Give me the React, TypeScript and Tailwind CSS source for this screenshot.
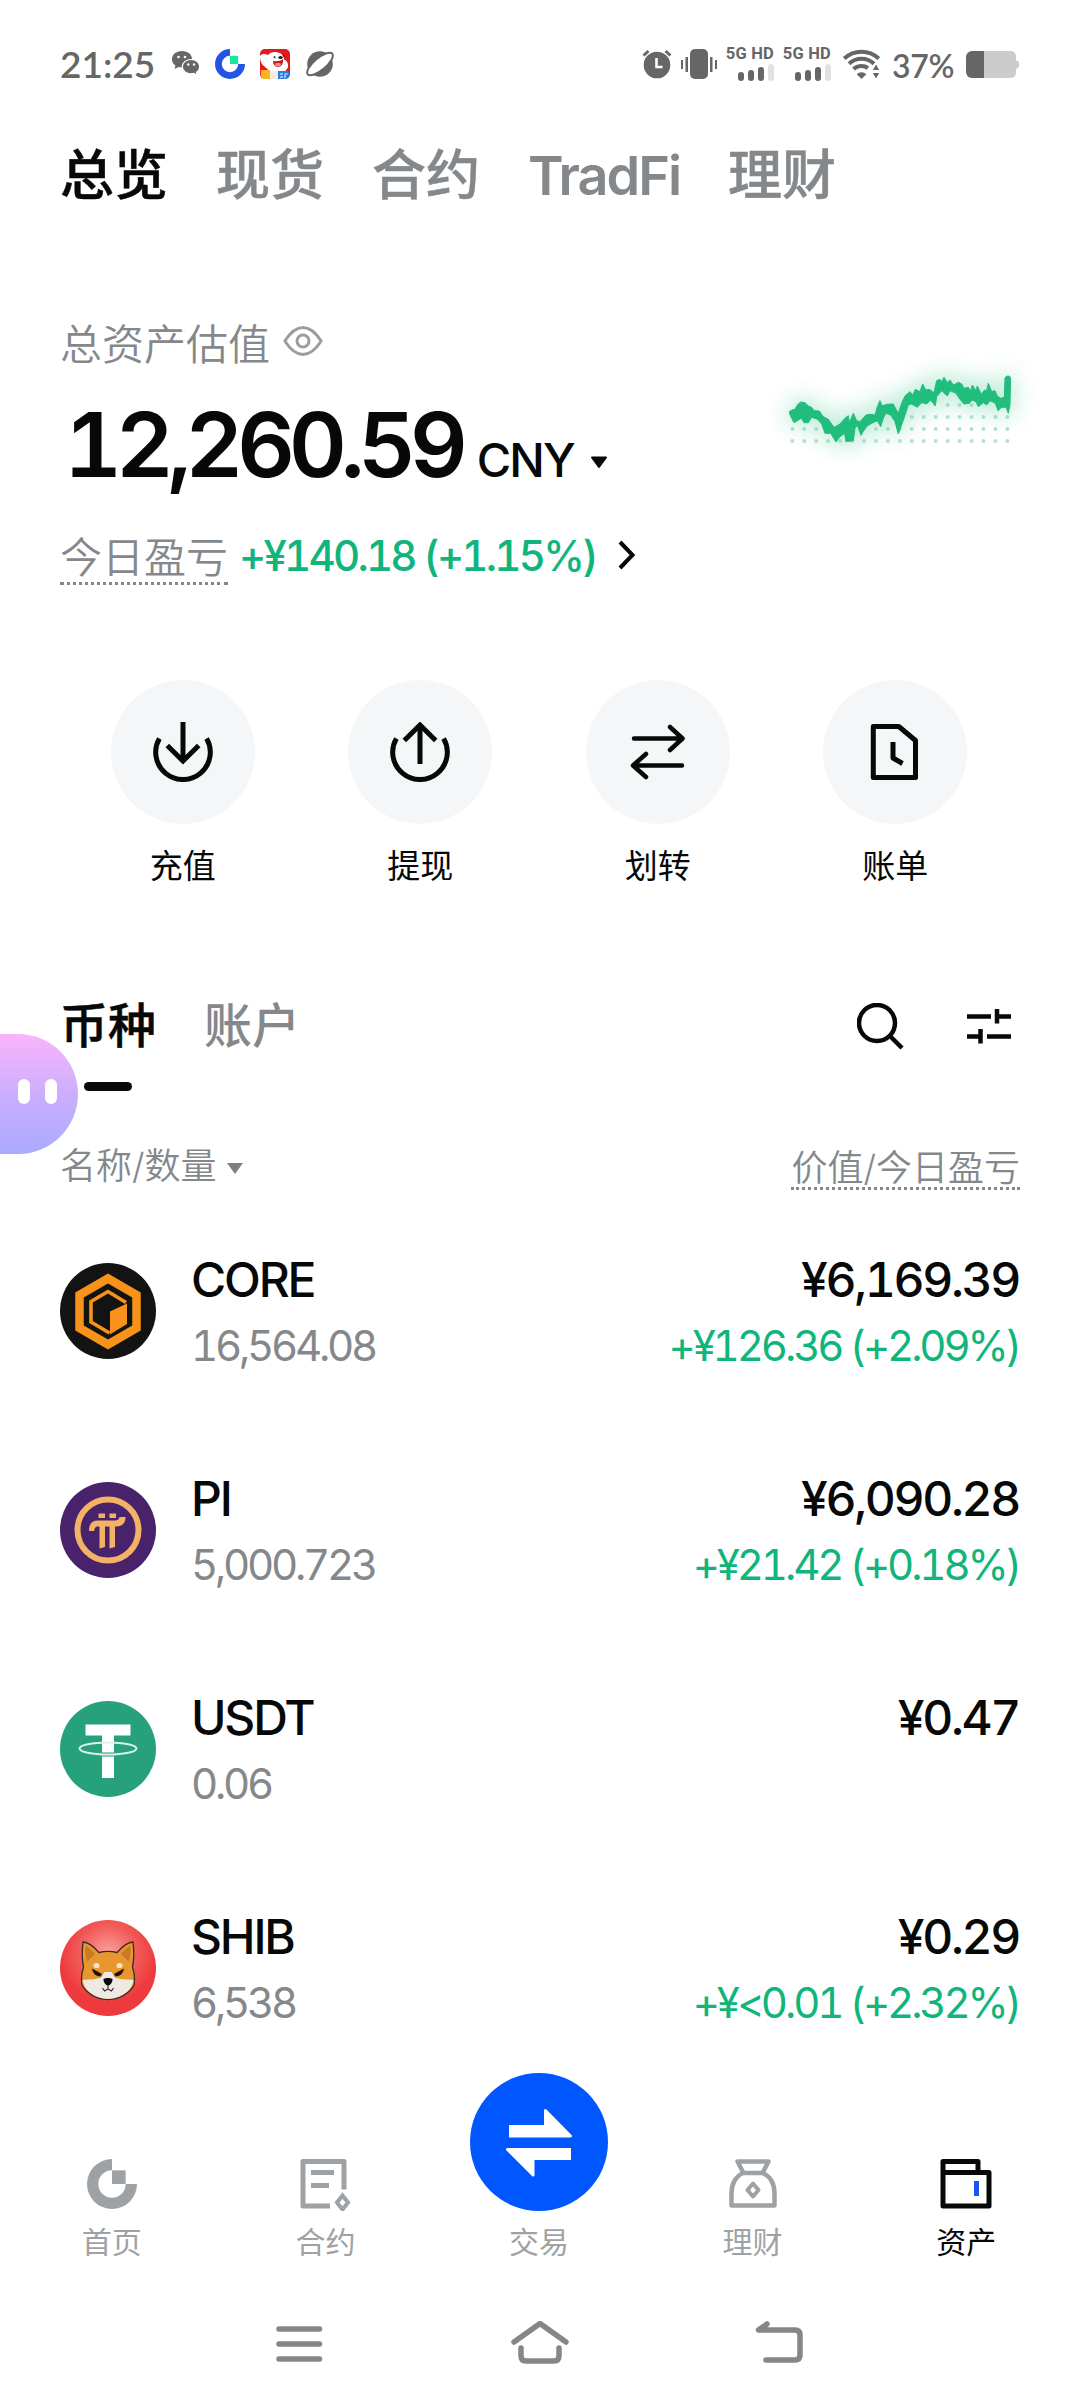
import type { ReactNode } from "react";

/* ---------- Status bar ---------- */

function WechatIcon() {
  return (
    <svg width="30" height="28" viewBox="0 0 30 28" fill="#666">
      <path d="M11 1C5 1 1 4.600 1 9.200c0 2.700 1.300 4.900 3.400 6.300L3.600 19l4-2c1 .3 2.200.5 3.400.5C17 17.500 21 13.800 21 9.200S17 1 11 1z" />
      <path
        d="M20 9.500c-5 0-8.700 3.200-8.700 7.200s3.700 7.100 8.700 7.100c1 0 2-.1 2.900-.4l3.300 1.900-.7-3.100c2-1.300 3.200-3.200 3.200-5.500 0-4-3.700-7.200-8.700-7.200z"
        stroke="#fff"
        strokeWidth="1.200"
      />
      <g fill="#fff">
        <circle cx="7.500" cy="7" r="1.300" />
        <circle cx="14" cy="7" r="1.300" />
        <circle cx="17.300" cy="14.500" r="1.200" />
        <circle cx="23" cy="14.500" r="1.200" />
      </g>
    </svg>
  );
}

function GateIcon({ size, ring, square }: { size: number; ring: string; square: string }) {
  return (
    <svg width={size} height={size} viewBox="0 0 30 30">
      <path d="M15 0a15 15 0 1 0 15 15h-6.800A8.200 8.200 0 1 1 15 6.800z" fill={ring} />
      <path d="M15 6.800h8.200V15H15z" fill={square} />
    </svg>
  );
}

function DogAppIcon() {
  return (
    <svg width="30" height="30" viewBox="0 0 30 30">
      <rect width="30" height="30" rx="5" fill="#e5191c" />
      <path d="M0 7c2-2.500 5-2.500 8-1 2-2.500 6-3.500 10-2.500 4 1 6 4 6 7 3 1 4.500 4 4 8l-3 4H10L4 17C1 15 0 11 0 7z" fill="#fff" />
      <path d="M13 12c4 .5 8 0 10-2 .5 4-1 8-5 8-3 0-5-3-5-6z" fill="#c8161d" />
      <ellipse cx="18" cy="15.500" rx="3" ry="1.800" fill="#f58a8a" />
      <ellipse cx="20.500" cy="8.500" rx="2.200" ry="1.500" fill="#222" />
      <circle cx="14.500" cy="8.200" r="1" fill="#222" />
      <circle cx="23.500" cy="6.800" r=".9" fill="#222" />
      <path d="M1 21h9v9H5a4 4 0 0 1-4-4z" fill="#f8b51c" />
      <path d="M10 22h8v8h-8z" fill="#f3ece0" />
      <path d="M18 22h11v4a4 4 0 0 1-4 4h-7z" fill="#2b7be4" />
      <path d="M20 25h3m1.500 0h3M20 28h3m2-2v3" stroke="#fff" />
    </svg>
  );
}

function PlanetIcon() {
  return (
    <svg width="30" height="28" viewBox="0 0 30 28">
      <circle cx="15" cy="14" r="12.800" fill="#666" />
      <ellipse cx="15" cy="14" rx="16" ry="6" transform="rotate(-40 15 14)" fill="#fff" stroke="#666" strokeWidth="2" />
    </svg>
  );
}

function AlarmIcon() {
  return (
    <svg width="30" height="30" viewBox="0 0 30 30" fill="none">
      <circle cx="15" cy="16" r="13.300" fill="#666" />
      <path d="M1.500 6.500 6.500 2M28.500 6.500 23.500 2" stroke="#666" strokeWidth="3" />
      <path d="M14.500 9v9h6" stroke="#fff" strokeWidth="2.600" />
    </svg>
  );
}

function VibrateIcon() {
  return (
    <svg width="36" height="30" viewBox="0 0 36 30" fill="#666">
      <rect x="9" width="18" height="30" rx="5" />
      <path d="M0 11h2v9H0zM4.500 8H7v15H4.500zM34 11h2v9h-2zM29 8h2.500v15H29z" />
    </svg>
  );
}

function Signal() {
  return (
    <div className="flex w-[48px] flex-col items-end">
      <span className="whitespace-nowrap font-['Roboto'] text-[16.500px] font-bold leading-[13px] tracking-[0.200px]">5G HD</span>
      <div className="mt-1 flex items-end gap-1">
        <i className="h-[9px] w-[6px] rounded-sm bg-[#666]" />
        <i className="h-[11px] w-[6px] rounded-sm bg-[#666]" />
        <i className="h-[14px] w-[6px] rounded-sm bg-[#666]" />
        <i className="h-[17px] w-[6px] rounded-sm bg-[#e2e2e2]" />
      </div>
    </div>
  );
}

function WifiIcon() {
  return (
    <svg width="37" height="30" viewBox="0 0 37 30" fill="none" stroke="#666" strokeWidth="4">
      <path d="M1.300 9.500a25 25 0 0 1 34.400 0M6 14.800a18 18 0 0 1 25 0M10.500 20a11.500 11.500 0 0 1 14.500-1" />
      <path d="M18.500 30l-4.800-4.800a7 7 0 0 1 9.600 0z" fill="#666" stroke="none" />
      <path d="M33 15.500l3.200 5.500h-6.400zM33 29.500l3.200-5.500h-6.400z" fill="#666" stroke="none" />
    </svg>
  );
}

function StatusBar() {
  return (
    <div className="flex h-[128px] items-center pl-[60px] pr-[61px] text-[#666]">
      <span className="w-[111px] pb-[2px] font-['Lato'] text-[37px] font-semibold leading-none">21:25</span>
      <WechatIcon />
      <div className="ml-[14px] flex items-center gap-[15px]">
        <GateIcon size={30} ring="#2354e6" square="#17e6a1" />
        <DogAppIcon />
        <PlanetIcon />
      </div>
      <div className="ml-auto flex items-center">
        <AlarmIcon />
        <div className="mx-[9px] flex"><VibrateIcon /></div>
        <Signal />
        <div className="ml-[9px] mr-[12px] flex"><Signal /></div>
        <WifiIcon />
        <span className="ml-[12px] w-[74px] pt-1 font-['Lato'] text-[32px] font-semibold leading-none tracking-[-0.300px]">37%</span>
        <svg width="53" height="27" viewBox="0 0 53 27">
          <path d="M6 0h39a5 5 0 0 1 5 5v4.500a3 3 0 0 1 3 3v2a3 3 0 0 1-3 3V22a5 5 0 0 1-5 5H6z" fill="#ccc" />
          <path d="M18 0H6a6 6 0 0 0-6 6v15a6 6 0 0 0 6 6h12z" fill="#666" />
        </svg>
      </div>
    </div>
  );
}

/* ---------- Overview ---------- */

const topTabs = ["总览", "现货", "合约", "TradFi", "理财"];

function TopTabs() {
  return (
    <div className="flex gap-12 px-[60px] pt-3 text-[54px] font-medium leading-[72px] [-webkit-text-stroke:0.500px]">
      {topTabs.map((tab, i) => (
        <span
          key={tab}
          className={i === 0 ? "text-[#070808]" : tab === "TradFi" ? "font-semibold tracking-[-2px] text-[#85888b] [-webkit-text-stroke:0px]" : "text-[#85888b]"}
        >
          {tab}
        </span>
      ))}
    </div>
  );
}

const dotRows = [
  { y: 55, from: 13, to: 15 },
  { y: 67, from: 10, to: 18 },
  { y: 79, from: 0, to: 18 },
  { y: 91, from: 0, to: 18 },
];

const trend =
  "88,185 96,180 105,178 112,165 122,156 135,158 145,168 155,172 162,182 178,183 190,200 205,208 222,232 240,222 255,205 265,197 267,215 274,205 280,190 290,212 300,215 318,195 330,193 345,195 352,170 360,152 366,168 380,163 400,162 408,178 415,190 425,160 435,138 450,125 458,135 466,118 480,125 488,102 497,120 508,118 522,128 530,92 540,88 545,95 552,82 562,98 570,90 580,105 596,97 605,102 612,115 625,112 632,122 637,105 648,122 652,108 664,133 674,120 680,122 685,100 695,125 705,122 712,138 722,145 733,142 735,85 739,79 744,78 749,79 752,85 750,165 745,190 738,172 725,172 714,182 706,160 690,152 680,165 670,158 655,170 648,155 636,150 628,160 612,162 600,148 588,130 570,122 562,138 545,122 530,140 526,168 512,150 500,162 485,158 472,172 455,162 445,165 432,205 415,252 405,215 392,195 378,190 370,205 362,230 352,212 335,220 322,228 312,240 303,256 292,225 285,235 280,272 258,275 254,250 240,260 228,276 212,250 195,250 185,222 172,208 155,202 145,218 132,218 124,205 102,218 90,195";

function TrendChart() {
  return (
    <svg className="overflow-visible" width="290" height="120" viewBox="0 0 290 120">
      <defs>
        <filter id="glow" x="-30%" y="-80%" width="160%" height="260%">
          <feGaussianBlur stdDeviation="12" />
        </filter>
      </defs>
      <g filter="url(#glow)" opacity=".4">
        <polygon points={trend} transform="scale(.3333)" fill="#21bd7d" stroke="#21bd7d" strokeWidth="14" />
      </g>
      {dotRows.map(({ y, from, to }) =>
        Array.from({ length: to - from + 1 }, (_, i) => (
          <circle key={`${y}-${i}`} cx={32.3 + (from + i) * 11.95} cy={y} r="2" fill="#7fcfae" opacity=".6" />
        )),
      )}
      <polygon points={trend} transform="scale(.3333)" fill="#21bd7d" stroke="#21bd7d" strokeWidth="3" strokeLinejoin="round" />
    </svg>
  );
}

function EyeIcon() {
  return (
    <svg width="40" height="32" viewBox="0 0 40 32" fill="none" stroke="#9b9ea0" strokeWidth="3">
      <path d="M1.800 16C7 8 13 2.500 20 2.500S33 8 38.200 16C33 24 27 29.500 20 29.500S7 24 1.800 16z" strokeLinejoin="round" />
      <circle cx="20" cy="16" r="6" />
    </svg>
  );
}

function Overview() {
  return (
    <div className="mt-[103px] flex justify-between pl-[60px] pr-[30px]">
      <div>
        <div className="flex items-center gap-[13px]">
          <span className="text-[42px] font-[350] leading-[60px] text-[#85888b]">总资产估值</span>
          <div className="pb-2"><EyeIcon /></div>
        </div>
        <div className="mt-5 flex items-baseline text-[#070808]">
          <span className="ml-1 text-[90px] font-semibold leading-[100px] tracking-[-0.072em]">12,260.59</span>
          <span className="ml-[15px] text-[47px] font-medium leading-[60px] tracking-[-0.040em]">CNY</span>
          <svg className="ml-[16px] -translate-y-2" width="18" height="13" viewBox="0 0 18 13">
            <path d="M2 1.500h14L9 11z" fill="#070808" stroke="#070808" strokeWidth="2" strokeLinejoin="round" />
          </svg>
        </div>
        <div className="mt-8 flex items-start text-[42px] leading-[56px]">
          <span className="mt-[3px] h-[55px] border-b-[3px] border-dotted border-[#85888b] font-[350] text-[#85888b]">今日盈亏</span>
          <span className="ml-[11px] mt-px whitespace-nowrap font-medium tracking-[-0.066em] text-[#10b57c]">+¥140.18 (+1.15%)</span>
          <svg className="ml-[21px] mt-[13px]" width="20" height="30" viewBox="0 0 20 30" fill="none" stroke="#070808" strokeWidth="4">
            <path d="M3 2l12.500 13L3 28" />
          </svg>
        </div>
      </div>
      <div className="mt-[35px]"><TrendChart /></div>
    </div>
  );
}

const actions: { label: string; icon: ReactNode }[] = [
  {
    label: "充值",
    icon: <path d="M6.400 16.500a27.300 27.300 0 1 0 47.200 0M30 0v39.500M14.300 23.500 30 39l15.700-15.500" />,
  },
  {
    label: "提现",
    icon: <path d="M6.400 16.500a27.300 27.300 0 1 0 47.200 0M30 42V3M14.300 18.500 30 3l15.700 15.500" />,
  },
  {
    label: "划转",
    icon: <path d="M6 16.500h48M42 5l12.500 11.500L42 28M54 43.500H6M18 32 5 43.500 18 55" strokeWidth="4.500" strokeLinecap="round" strokeLinejoin="round" />,
  },
  {
    label: "账单",
    icon: <path d="M8.300 4.500h25.500L50.500 18.500v37H8.300zM28 20v16l9.500 5.500" strokeLinejoin="round" />,
  },
];

function Actions() {
  return (
    <div className="mt-[95px] grid grid-cols-4 pl-[64px] pr-[66px]">
      {actions.map((a) => (
        <div key={a.label} className="flex flex-col items-center">
          <div className="flex size-36 items-center justify-center rounded-full bg-[#f4f6f8]">
            <svg width="60" height="60" viewBox="0 0 60 60" fill="none" stroke="#070808" strokeWidth="5">{a.icon}</svg>
          </div>
          <span className="mt-[22px] text-[33px] leading-[40px] text-[#070808]">{a.label}</span>
        </div>
      ))}
    </div>
  );
}

/* ---------- Coins ---------- */

function CoinTabs() {
  return (
    <div className="mt-[110px] flex items-start justify-between px-[60px]">
      <div className="flex gap-12 text-[48px] font-medium leading-[60px]">
        <div className="flex flex-col items-center">
          <span className="text-[#070808] [-webkit-text-stroke:0.500px]">币种</span>
          <i className="mt-[26px] h-[9px] w-12 rounded-full bg-[#070808]" />
        </div>
        <span className="text-[#85888b]">账户</span>
      </div>
      <div className="flex gap-[60px] pr-[7px] pt-[7px]">
        <svg width="48" height="48" viewBox="0 0 48 48" fill="none" stroke="#070808" strokeWidth="4.500">
          <circle cx="20" cy="20" r="18" />
          <path d="M33 33l12 12" />
        </svg>
        <svg width="48" height="48" viewBox="0 0 48 48" fill="none" stroke="#070808" strokeWidth="4.500">
          <path d="M2 13.500h24M32 6v14.500M32 13.500h14M2 33.500h14M15.500 26v14.500M22 33.500h24" />
        </svg>
      </div>
    </div>
  );
}

function ListHeader() {
  return (
    <div className="mt-[51px] flex items-start justify-between px-[60px] text-[36px] font-[350] leading-[48px] text-[#85888b]">
      <div className="flex items-center">
        <span>名称/数量</span>
        <svg className="ml-[10px] mt-[4px]" width="16" height="11" viewBox="0 0 16 11">
          <path d="M0 0h16L8 11z" fill="#7d8083" />
        </svg>
      </div>
      <span className="mt-[2px] h-[46px] border-b-[3px] border-dotted border-[#85888b]">价值/今日盈亏</span>
    </div>
  );
}

function CoreLogo() {
  return (
    <svg width="96" height="96" viewBox="0 0 96 96">
      <circle cx="48" cy="48" r="48" fill="#131313" />
      <path d="M48 15.500 76.500 32v33L48 81.500 19.500 65V32z" fill="none" stroke="#f7931a" strokeWidth="8.500" />
      <path d="M66 39.500 48 28.500 31 38.500v20.500L49.500 70" fill="none" stroke="#f7931a" strokeWidth="3.600" />
      <path d="M67 40.500v20.500L50 71.500V48.500z" fill="#f7931a" />
    </svg>
  );
}

function PiLogo() {
  return (
    <svg width="96" height="96" viewBox="0 0 96 96">
      <circle cx="48" cy="48" r="48" fill="#48226b" />
      <circle cx="48" cy="48" r="30.500" fill="none" stroke="#f3b265" strokeWidth="6" />
      <g fill="#f3b265">
        <path d="M38.500 31.500h6.500v4.500h-6.500zM49.500 31.500H56v4.500h-6.500z" />
        <path d="M29 49c0-7 3-10.500 9-10.500h17c2.500 0 4-1 4.500-3.500h6c0 6-3 9.500-9 9.500H37.500c-2 0-3 1.500-3.300 4.500z" />
        <path d="M39.500 43H45v22l-5.500 1.500zM49.500 43H55v22l-5.500 1.500z" />
      </g>
    </svg>
  );
}

function UsdtLogo() {
  return (
    <svg width="96" height="96" viewBox="0 0 96 96">
      <circle cx="48" cy="48" r="48" fill="#26a17b" />
      <path d="M25.500 23.500h45v11H54v42.500H42V34.500H25.500z" fill="#fff" />
      <path d="M42 53.500a80 20 0 0 0 12 0" fill="none" stroke="#26a17b" strokeWidth="4" />
      <ellipse cx="48" cy="47.500" rx="28.500" ry="6" fill="none" stroke="#d9f3ea" strokeWidth="2" />
    </svg>
  );
}

function ShibLogo() {
  return (
    <svg width="96" height="96" viewBox="0 0 96 96">
      <defs>
        <radialGradient id="shib" cx=".5" cy=".35" r=".5">
          <stop offset="0" stopColor="#f9a3a0" />
          <stop offset=".55" stopColor="#f2605e" />
          <stop offset="1" stopColor="#ee3a3c" />
        </radialGradient>
      </defs>
      <circle cx="48" cy="48" r="48" fill="url(#shib)" />
      <path
        d="M23 22c5 0 11 5 16 10.500 6-1.500 12-1.500 18 0C62 27 68 22 73 22c1 8 1 18-.5 25 2 6 2.500 12 1.500 18-4 8-14 14-26 14.500C36 79 26 73 22 65c-1-6-.5-12 1.500-18C22 40 22 30 23 22z"
        fill="#e8962e"
        stroke="#3d2a20"
        strokeWidth="1.300"
      />
      <path d="M25.500 26c3 1 7 5 9.500 8l-8 8c-1.500-5-2-11-1.500-16zM70.500 26c-3 1-7 5-9.500 8l8 8c1.500-5 2-11 1.500-16z" fill="#c97a28" />
      <path d="M22.500 60c7-1 14 0 19-3l3-5h7l3 5c5 3 12 2 19 3-1 10-12 18.500-25.500 19C34 78.500 24 70 22.500 60z" fill="#efe9e4" />
      <ellipse cx="36.500" cy="45.500" rx="3" ry="2.600" fill="#fbe3c4" />
      <ellipse cx="59.500" cy="45.500" rx="3" ry="2.600" fill="#fbe3c4" />
      <path d="M32 48.500l10 5.500-1.500 2.500c-4 0-8-3-8.500-8zM64 48.500l-10 5.500 1.500 2.500c4 0 8-3 8.500-8z" fill="#1c1512" />
      <path d="M43.500 59.500c0-2 9-2 9 0 0 3-2.500 6-4.500 6s-4.500-3-4.500-6z" fill="#0d0b0a" />
      <path d="M48 65v4M42.500 68l2 3 3.500-2 3.500 2 2-3" fill="none" stroke="#3a302c" strokeWidth="1.200" />
    </svg>
  );
}

const coins = [
  { symbol: "CORE", amount: "16,564.08", value: "¥6,169.39", pnl: "+¥126.36 (+2.09%)", Logo: CoreLogo },
  { symbol: "PI", amount: "5,000.723", value: "¥6,090.28", pnl: "+¥21.42 (+0.18%)", Logo: PiLogo },
  { symbol: "USDT", amount: "0.06", value: "¥0.47", pnl: "", Logo: UsdtLogo },
  { symbol: "SHIB", amount: "6,538", value: "¥0.29", pnl: "+¥<0.01 (+2.32%)", Logo: ShibLogo },
];

function CoinList() {
  return (
    <div className="-mb-4 mt-[10px]">
      {coins.map(({ symbol, amount, value, pnl, Logo }) => (
        <div key={symbol} className="flex h-[219px] items-center pl-[60px] pr-[61px]">
          <div className="mt-[2px]"><Logo /></div>
          <div className="ml-[35px] flex flex-1 flex-col gap-3">
            <div className="flex justify-between text-[48px] font-medium leading-[60px] text-[#070808]">
              <span className="tracking-[-0.045em]">{symbol}</span>
              <span className="tracking-[-0.049em]">{value}</span>
            </div>
            <div className="flex h-12 justify-between text-[42px] leading-[48px]">
              <span className="tracking-[-0.077em] text-[#85888b]">{amount}</span>
              <span className="tracking-[-0.074em] text-[#10b57c]">{pnl}</span>
            </div>
          </div>
        </div>
      ))}
    </div>
  );
}

/* ---------- Bottom navigation ---------- */

function NavItem({ label, active, children }: { label: string; active?: boolean; children: ReactNode }) {
  return (
    <div className="flex flex-col items-center">
      {children}
      <span className={`mt-[13px] text-[30px] leading-[36px] ${active ? "text-[#070808]" : "text-[#9fa2a5]"}`}>{label}</span>
    </div>
  );
}

function BottomNav() {
  return (
    <div className="mt-auto grid grid-cols-5 items-end pl-[5px] pr-[7px]">
      <NavItem label="首页">
        <div className="pb-[2px]"><GateIcon size={50} ring="#9fa2a5" square="#9fa2a5" /></div>
      </NavItem>
      <NavItem label="合约">
        <svg width="56" height="56" viewBox="0 0 56 56" fill="none" stroke="#9fa2a5" strokeWidth="5">
          <path d="M33 51H6V6.500h41v28M14 17.500h23M14 30.500h18" strokeLinejoin="round" />
          <path d="M45.500 40.500l5.500 7-5.500 7-5.500-7z" strokeWidth="4" />
        </svg>
      </NavItem>
      <NavItem label="交易">
        <svg width="138" height="138" viewBox="0 0 138 138">
          <circle cx="69" cy="69" r="69" fill="#0157ff" />
          <path d="M39 52h35V37.500c0-1.500 1.500-2 2.500-1L101 61.500c2 2 1 3-1 3H39zM101 75v12H64.500v15c0 1.500-1.500 2-2.500 1L37 78c-2-2-1-3 1-3z" fill="#fff" />
        </svg>
      </NavItem>
      <NavItem label="理财">
        <svg width="56" height="56" viewBox="0 0 56 56" fill="none" stroke="#9fa2a5" strokeWidth="4.500" strokeLinejoin="round">
          <path d="M12.500 6.500h31L37.500 18h-19zM18.500 18h19C46 21 49.500 30 49.500 38v12.500h-43V38c0-8 3.500-17 12-20z" />
          <path d="M28 28.500l5.500 6.500-5.500 6.500-5.500-6.500z" strokeWidth="4" />
        </svg>
      </NavItem>
      <NavItem label="资产" active>
        <svg width="56" height="56" viewBox="0 0 56 56" fill="none" stroke="#070808" strokeWidth="5" strokeLinejoin="round">
          <path d="M5 17.500V6.500h35v11M5 17.500h46V51H5z" />
          <path d="M38.500 26v15" stroke="#1d54f0" />
        </svg>
      </NavItem>
    </div>
  );
}

function SystemNav() {
  return (
    <div className="mt-5 flex h-32 justify-center gap-[183px] pt-[41px]">
      <svg width="56" height="46" viewBox="0 0 56 46" stroke="#868686" strokeWidth="5.500" strokeLinecap="round">
        <path d="M8 8h40.500M8 23h40.500M8 38h40.500" />
      </svg>
      <svg width="60" height="46" viewBox="0 0 60 46" fill="none" stroke="#868686" strokeWidth="5.500" strokeLinecap="round" strokeLinejoin="round">
        <path d="M4 21 30 2.500 56 21M11 27v8q0 5 5 5h28q5 0 5-5v-8" />
      </svg>
      <svg width="56" height="46" viewBox="0 0 56 46" fill="none" stroke="#868686" strokeWidth="5.500" strokeLinecap="round" strokeLinejoin="round">
        <path d="M14 3 5.500 9H42q5 0 5 5v20q0 5-5 5H13" />
      </svg>
    </div>
  );
}

export default function App() {
  return (
    <div className="relative flex h-[2408px] w-[1080px] flex-col overflow-hidden bg-white font-['Inter','Noto_Sans_CJK_SC',sans-serif] tabular-nums">
      <StatusBar />
      <TopTabs />
      <Overview />
      <Actions />
      <CoinTabs />
      <ListHeader />
      <CoinList />
      <BottomNav />
      <SystemNav />
      {/* Floating assistant docked to the left edge */}
      <div className="absolute left-0 top-[1034px] flex h-[120px] w-[78px] items-start gap-[15px] rounded-r-[60px] bg-linear-to-b from-[#f9b4fb] via-[#cbaefd] via-50% to-[#a9aaff] pl-[18px] pt-[45px]">
        <i className="h-[25px] w-3 rounded-full bg-white" />
        <i className="h-[25px] w-3 rounded-full bg-white" />
      </div>
    </div>
  );
}
